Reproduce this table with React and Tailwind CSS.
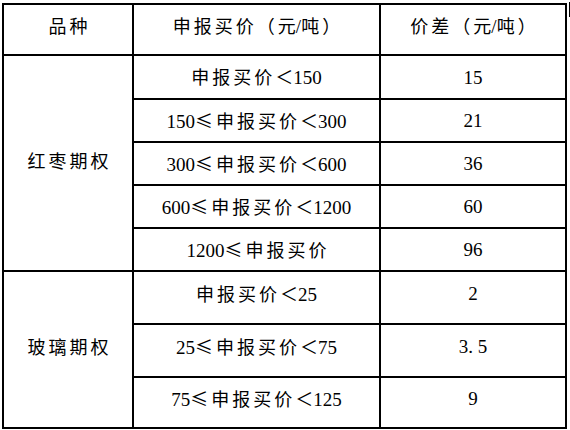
import React from "react";

const CJK = /([\u2264\u3000-\u9fff\uff00-\uffef]+)/;

function T({ s }) {
  const parts = s.split(CJK).filter(Boolean);
  return (
    <span className="whitespace-nowrap leading-none">
      {parts.map((p, i) => {
        if (CJK.test(p)) {
          const head = p.slice(0, -1);
          const tail = p.slice(-1);
          return (
            <span
              key={i}
              className="font-['Noto_Sans_CJK_SC',sans-serif] text-[18px] leading-none"
            >
              {head && <span className="tracking-[3px]">{head}</span>}
              <span>{tail}</span>
            </span>
          );
        }
        return (
          <span
            key={i}
            className="font-['Liberation_Serif',serif] text-[19px] leading-none"
          >
            {p}
          </span>
        );
      })}
    </span>
  );
}

function Cell({ s, className = "" }) {
  return (
    <div className={"bg-white flex items-center justify-center text-black " + className}>
      <T s={s} />
    </div>
  );
}

export default function App() {
  const jujube = [
    ["申报买价＜150", "15"],
    ["150≤申报买价＜300", "21"],
    ["300≤申报买价＜600", "36"],
    ["600≤申报买价＜1200", "60"],
    ["1200≤申报买价", "96"],
  ];
  const glass = [
    ["申报买价＜25", "2"],
    ["25≤申报买价＜75", "3. 5"],
    ["75≤申报买价＜125", "9"],
  ];
  return (
    <div className="relative w-[570px] h-[430px] bg-white overflow-hidden">
      <div className="ml-[2px] mt-[3px] w-[565px] bg-black p-[2px] grid gap-[2px] grid-cols-[128px_245px_184px] grid-rows-[49px_42px_41px_41px_41px_41px_51px_51px_49px]">
        <Cell s="品种" className="pb-[8px]" />
        <Cell s="申报买价（元/吨）" className="pb-[8px]" />
        <Cell s="价差（元/吨）" className="pb-[8px]" />

        <Cell s="红枣期权" className="row-span-5 pb-[6px]" />
        {jujube.map(([a, b], i) => (
          <React.Fragment key={i}>
            <Cell s={a} />
            <Cell s={b} />
          </React.Fragment>
        ))}

        <Cell s="玻璃期权" className="row-span-3 pb-[6px]" />
        {glass.map(([a, b], i) => (
          <React.Fragment key={i}>
            <Cell s={a} className="pb-[8px]" />
            <Cell s={b} className="pb-[8px]" />
          </React.Fragment>
        ))}
      </div>
      <div className="absolute left-[569px] top-[2px] w-[1px] h-[15px] bg-black" />
    </div>
  );
}
